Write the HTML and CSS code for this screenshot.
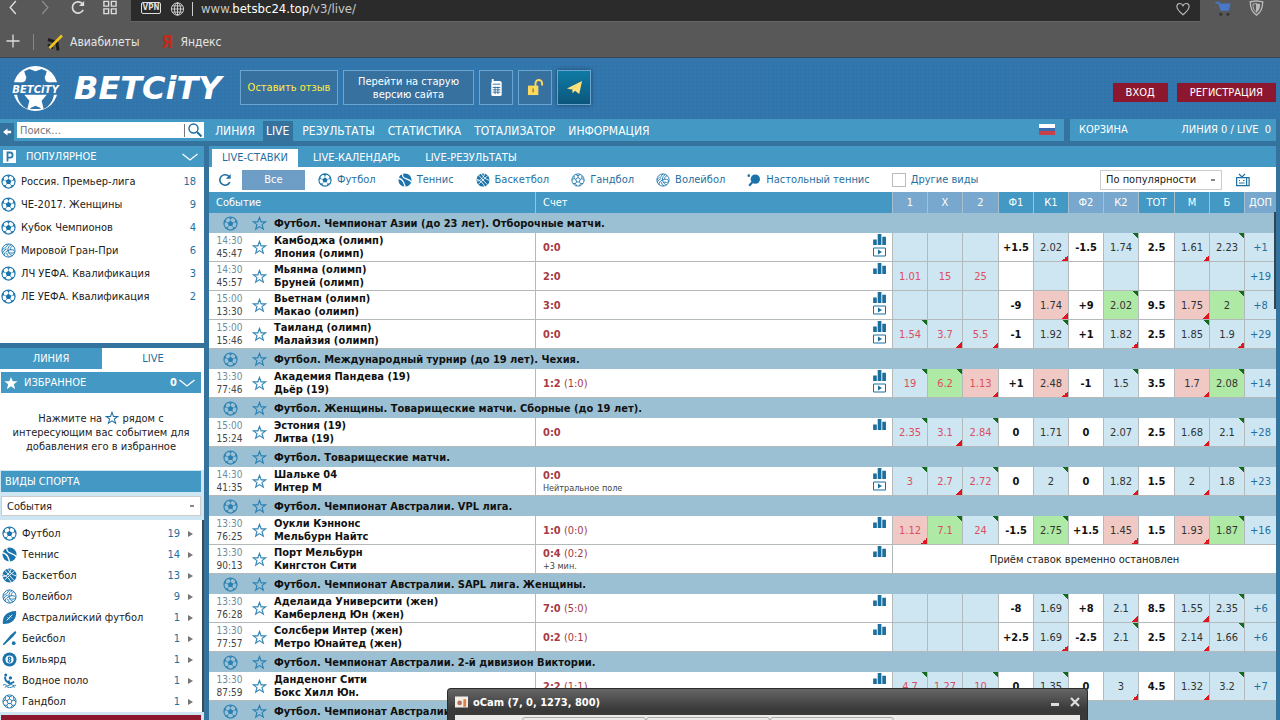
FILE: index.html
```html
<!DOCTYPE html>
<html lang="ru">
<head>
  <meta charset="UTF-8">
  <title>Betcity - Live</title>
  <link rel="stylesheet" href="styles.css">
</head>
<body>
  <svg class="sprite">
    <symbol id="i-football" viewBox="0 0 16 16">
      <circle cx="8" cy="8" r="7" fill="none" stroke="currentColor" stroke-width="1.2"/>
      <path fill="currentColor" d="M8 5l3 2.200-1.100 3.500H6.100L5 7.200zM5.300 1.200h5.400L8 3.400zM12.700 6.500l.8-3.300L15.200 8.500zM3.300 6.500l-.8-3.300L.8 8.500zM10.900 12l3-.4-4 3.400zM5.100 12l-3-.4 4 3.400z"/>
      <path stroke="currentColor" stroke-width=".7" d="M8 5V3M11 7.200l2-.7M9.900 10.700l1 1.500M6.100 10.700l-1 1.500M5 7.200l-2-.7"/>
    </symbol>
    <symbol id="i-tennis" viewBox="0 0 16 16">
      <circle cx="8" cy="8" r="7.500" fill="currentColor"/>
      <path fill="none" stroke="#fff" stroke-width="1.500" d="M5 .5c0 4 1 5 4 6s5 2 6.500 4M0 6c3 .5 5 2 6 4s2 4 2 6"/>
    </symbol>
    <symbol id="i-basket" viewBox="0 0 16 16">
      <circle cx="8" cy="8" r="7.500" fill="currentColor"/>
      <path fill="none" stroke="#fff" stroke-width="1" d="M3 2.500l10 11M13.500 3l-11 10M6 .5c1 3 5 7 9.500 8M.5 7c4 1 8 5 9.500 8.500M10 .5C9 5 5 9 .5 9.500"/>
    </symbol>
    <symbol id="i-handball" viewBox="0 0 16 16">
      <g fill="none" stroke="currentColor" stroke-width="1">
        <circle cx="8" cy="8" r="7"/>
        <path d="M8 5.200l2.600 1.900-1 3.100H6.400l-1-3.100zM8 5.200V3M10.600 7.100l2.200-.8M9.600 10.200l1.300 1.900M6.400 10.200l-1.300 1.900M5.400 7.100l-2.200-.8M8 3l3-1.200M8 3L5 1.800M12.800 6.300l-.6-3M12.800 6.300l2 2.200M3.200 6.300l.6-3M3.200 6.300l-2 2.200M10.900 12.100l2.800-.2M10.900 12.100L9.500 14.800M5.100 12.100l-2.800-.2M5.100 12.100l1.400 2.700"/>
      </g>
    </symbol>
    <symbol id="i-volley" viewBox="0 0 16 16">
      <g fill="none" stroke="currentColor" stroke-width="1">
        <circle cx="8" cy="8" r="7"/>
        <path d="M7.500 8C7 5 8.500 2.500 11 1.800M9.800 7.300c0-2 .8-3.500 2.800-4.300M7.500 8c3-1.500 6-1 7.300 1M7.500 8c-2.800 1-4.500 3.500-4 5.500M6 6.500c-2.500.8-4 2.500-4.400 4.500M5.200 5C3.500 5.200 2 6.500 1.200 8M5.500 4.500C6 3 7 1.800 8.200 1.200M8.800 10.200c2 .8 4 .8 5.700-.2M7.500 8c.2 3 2.500 5.500 5 5.200M6 10.500c.5 2 1.500 3.500 3 4.400"/>
      </g>
    </symbol>
    <symbol id="i-pingpong" viewBox="0 0 16 16">
      <circle cx="9.500" cy="7" r="5.300" fill="currentColor"/>
      <circle cx="2" cy="3" r="1.500" fill="currentColor"/>
      <path stroke="currentColor" stroke-width="2.500" d="M6 10.500L2.500 14.500"/>
    </symbol>
    <symbol id="i-rugby" viewBox="0 0 16 16">
      <path fill="currentColor" d="M1 15C0 8 4 1 15 1c1 8-4 14-14 14z"/>
      <path stroke="#fff" stroke-width="1" d="M5 11l6-6M6 8l2 2M8 6l2 2"/>
    </symbol>
    <symbol id="i-baseball" viewBox="0 0 16 16">
      <path fill="currentColor" d="M.8 14.200L9.500 4l4-3.500c1.500-.5 2 .8 1.500 1.700L11.500 6.500 2 15.200z"/>
      <circle cx="12.500" cy="13" r="2" fill="currentColor"/>
    </symbol>
    <symbol id="i-billiard" viewBox="0 0 16 16">
      <circle cx="8" cy="8" r="7.500" fill="currentColor"/>
      <circle cx="8" cy="8" r="4.300" fill="#fff"/>
      <path fill="none" stroke="currentColor" stroke-width="1.300" d="M8 8a1.300 1.300 0 1 1 .1 0a1.400 1.400 0 1 1-.1 0"/>
    </symbol>
    <symbol id="i-polo" viewBox="0 0 16 16">
      <circle cx="4" cy="2" r="1.600" fill="currentColor"/>
      <circle cx="9" cy="5.200" r="1.800" fill="currentColor"/>
      <path fill="none" stroke="currentColor" stroke-width="2" d="M3 4l1 4 4 3.500 5-2M7 8l1 3"/>
      <path fill="none" stroke="currentColor" d="M1 13q2-1.500 3.500 0t3.500 0 3.500 0 3.500 0M3 15.200q2-1.500 3.500 0t3.500 0 3.500 0"/>
    </symbol>
    <symbol id="i-star" viewBox="0 0 16 16">
      <path fill="none" stroke="currentColor" stroke-width="1.200" d="M8 1.500l1.700 4.700h4.900l-3.900 3 1.400 4.900L8 11.300l-4.100 2.800 1.400-4.900-3.900-3h4.900z"/>
    </symbol>
    <symbol id="i-chart" viewBox="0 0 15 12">
      <path fill="currentColor" d="M0 6h4v6H0zM5 0h4v12H5zM10 3h4v9h-4z"/>
    </symbol>
    <symbol id="i-play" viewBox="0 0 14 10">
      <path fill="none" stroke="currentColor" d="M.5.5h12v8H.5z"/>
      <path fill="currentColor" d="M5 2l4 2.500L5 7z"/>
    </symbol>
    <symbol id="i-chevron" viewBox="0 0 16 8">
      <path fill="none" stroke="currentColor" stroke-width="1.300" d="M.5 1L8 7l7.500-6"/>
    </symbol>
    <symbol id="i-reload" viewBox="0 0 16 16">
      <path fill="none" stroke="currentColor" stroke-width="1.800" d="M13.500 10.500a6 6 0 1 1-.5-6"/>
      <path fill="currentColor" d="M14.500 1v5.500H9z"/>
    </symbol>
  </svg>

  <div class="browser">
    <div class="address-row">
      <div class="browser-nav">
        <svg class="nav-back" viewBox="0 0 8 16"><path d="M7 1L1 8l6 7"/></svg>
        <svg class="nav-forward" viewBox="0 0 8 16"><path d="M1 1l6 7-6 7"/></svg>
        <svg class="nav-reload"><use href="#i-reload"/></svg>
        <svg class="nav-grid" viewBox="0 0 16 16"><path d="M1.500 1.500h5v5h-5zM9.500 1.500h5v5h-5zM1.500 9.500h5v5h-5zM9.500 9.500h5v5h-5z"/></svg>
      </div>
      <div class="address">
        <span class="vpn">VPN</span>
        <svg class="globe" viewBox="0 0 16 16"><circle cx="8" cy="8" r="7"/><ellipse cx="8" cy="8" rx="3.500" ry="7"/><path d="M8 1v14M1 8h14M2.200 4.500h11.600M2.200 11.500h11.600"/></svg>
        <span class="url">www.<b>betsbc24.top</b>/v3/live/</span>
        <svg class="heart" viewBox="0 0 16 16"><path d="M8 14.500C3 10.500 1 8.500 1 5.200 1 1 6.500.5 8 4.200 9.500.5 15 1 15 5.200c0 3.300-2 5.300-7 9.300z"/></svg>
      </div>
      <div class="browser-tools">
        <svg class="cart" viewBox="0 0 18 18"><path fill="#4a78c8" d="M0 2h4l1 2h12l-2 8H6L3 4H0z"/><circle cx="6" cy="16" r="1.700" fill="#333"/><circle cx="14" cy="16" r="1.700" fill="#333"/></svg>
        <svg class="shield" viewBox="0 0 16 18"><path fill="none" stroke="#bbb" stroke-width="1.500" d="M1 2l7-1 7 1c0 8-2 12-7 15C3 14 1 10 1 2z"/><path fill="#bbb" d="M8 4l4 .5c0 5-1 7-4 9.500z"/><path fill="none" stroke="#bbb" d="M8 4l-4 .5c0 5 1 7 4 9.500z"/></svg>
      </div>
    </div>
    <div class="bookmarks">
      <svg class="plus" viewBox="0 0 14 14"><path d="M7 .5v13M.5 7h13"/></svg>
      <span class="sep"></span>
      <a href="#" class="bookmark">
        <svg viewBox="0 0 16 16"><path stroke="#1c1c1c" stroke-width="3" d="M1 5l9 3 1 8"/><path stroke="#1c1c1c" stroke-width="2" d="M1 10l5 4"/><path stroke="#f0c419" stroke-width="2.500" d="M2.500 13.500L15 1"/></svg>Авиабилеты</a>
      <a href="#" class="bookmark"><span class="ya">Я</span>Яндекс</a>
    </div>
  </div>

  <header class="header">
    <svg class="ball" viewBox="0 0 46 46">
      <circle cx="23" cy="23" r="22" fill="#fff"/>
      <path fill="#2f75ac" d="M17 4l6 2 6-2 5 2-2 7 4 5H10l4-5-2-7zM0 17h46v12H0zM5 29h7l5 6-2 8c-6-3-9-8-10-14zM41 29h-7l-5 6 2 8c6-3 9-8 10-14zM18 42l5-2 5 2v1H18z"/>
      <path fill="#fff" d="M4 16l5-8 5 3-1 5-5 1zM42 16l-5-8-5 3 1 5 5 1z"/>
      <text x="23" y="27" text-anchor="middle">BETCiTY</text>
    </svg>
    <a href="#" class="logo">BETCiTY</a>
    <div class="header-buttons">
      <button class="hbtn feedback">Оставить отзыв</button>
      <button class="hbtn old-version">Перейти на старую версию сайта</button>
      <button class="hbtn icon" aria-label="Мобильная версия"><svg viewBox="0 0 16 18"><path fill="#fff" d="M3 3V0h2v2h7l1.500 1.500V17l-1 1h-9l-1-1V4z"/><path stroke="#37719f" d="M4 5.500h8M4 9h8M4 11.500h8M4 14h8M6.500 8v8M9.500 8v8"/></svg></button>
      <button class="hbtn icon" aria-label="Доступ"><svg viewBox="0 0 18 18"><path fill="#ffd95e" d="M1 7h11v10H1z"/><path fill="none" stroke="#ffd95e" stroke-width="2" d="M9 8V4.500a3.500 3.500 0 0 1 7 0V7"/><path stroke="#8a7a3e" stroke-width="1.500" d="M6.500 10v4"/></svg></button>
      <button class="hbtn icon telegram" aria-label="Telegram"><svg viewBox="0 0 18 18"><path fill="#ffe27a" d="M1 10L17 2l-3 14-4.500-3.500L7 15l-.5-4.500L14 5l-8.500 6z"/></svg></button>
    </div>
    <div class="auth">
      <button class="red-btn">ВХОД</button>
      <button class="red-btn">РЕГИСТРАЦИЯ</button>
    </div>
  </header>

  <div class="navbar">
    <div class="search">
      <button class="collapse" aria-label="Свернуть"><svg viewBox="0 0 10 8"><path fill="#fff" d="M0 4l5-4v2.500h4v3H5V8z"/></svg></button>
      <label class="search-box">
        <input type="text" placeholder="Поиск...">
        <svg viewBox="0 0 14 14"><circle cx="5.500" cy="5.500" r="4.500" fill="none" stroke="#1b6ea3" stroke-width="1.400"/><path stroke="#1b6ea3" stroke-width="2" d="M9 9l4.500 4.500"/></svg>
      </label>
    </div>
    <nav class="menu">
      <a href="#">ЛИНИЯ</a>
      <a href="#" class="active">LIVE</a>
      <a href="#">РЕЗУЛЬТАТЫ</a>
      <a href="#">СТАТИСТИКА</a>
      <a href="#">ТОТАЛИЗАТОР</a>
      <a href="#">ИНФОРМАЦИЯ</a>
      <span class="flag"></span>
    </nav>
    <div class="basket"><span>КОРЗИНА</span><span>ЛИНИЯ 0 / LIVE &nbsp;0</span></div>
  </div>

  <div class="page">
    <aside class="sidebar">
      <section class="popular">
        <h2 class="side-title"><svg class="p-mark" viewBox="0 0 13 13"><path fill="#fff" d="M0 0h13v13H0z"/><path fill="none" stroke="#2b7db0" stroke-width="1.800" d="M4.500 11.500v-9h2.500a2.500 2.500 0 0 1 0 5.200H4.500"/></svg>ПОПУЛЯРНОЕ<svg class="chevron"><use href="#i-chevron"/></svg></h2>
        <ul class="popular-list">
          <li><svg><use href="#i-football"/></svg><a href="#">Россия. Премьер-лига</a><span>18</span></li>
          <li><svg><use href="#i-football"/></svg><a href="#">ЧЕ-2017. Женщины</a><span>9</span></li>
          <li><svg><use href="#i-football"/></svg><a href="#">Кубок Чемпионов</a><span>4</span></li>
          <li><svg><use href="#i-volley"/></svg><a href="#">Мировой Гран-При</a><span>6</span></li>
          <li><svg><use href="#i-football"/></svg><a href="#">ЛЧ УЕФА. Квалификация</a><span>3</span></li>
          <li><svg><use href="#i-football"/></svg><a href="#">ЛЕ УЕФА. Квалификация</a><span>2</span></li>
        </ul>
      </section>

      <div class="side-tabs">
        <button>ЛИНИЯ</button>
        <button class="active">LIVE</button>
      </div>

      <section class="favorites">
        <h2 class="side-title"><svg class="star-mark" viewBox="0 0 16 16"><path fill="#fff" d="M8 1l2 5h5.500l-4.300 3.400 1.600 5.600L8 11.700 3.200 15l1.600-5.600L.5 6H6z"/></svg>ИЗБРАННОЕ<b class="count">0</b><svg class="chevron"><use href="#i-chevron"/></svg></h2>
        <p>Нажмите на <svg><use href="#i-star"/></svg> рядом с<br>интересующим вас событием для<br>добавления его в избранное</p>
      </section>

      <section class="sports">
        <h2 class="side-title">ВИДЫ СПОРТА</h2>
        <div class="select-wrap">
          <select aria-label="События"><option>События</option></select>
        </div>
        <ul class="sports-list">
          <li><svg><use href="#i-football"/></svg><a href="#">Футбол</a><span>19</span></li>
          <li><svg><use href="#i-tennis"/></svg><a href="#">Теннис</a><span>14</span></li>
          <li><svg><use href="#i-basket"/></svg><a href="#">Баскетбол</a><span>13</span></li>
          <li><svg><use href="#i-volley"/></svg><a href="#">Волейбол</a><span>9</span></li>
          <li><svg><use href="#i-rugby"/></svg><a href="#">Австралийский футбол</a><span>1</span></li>
          <li><svg><use href="#i-baseball"/></svg><a href="#">Бейсбол</a><span>1</span></li>
          <li><svg><use href="#i-billiard"/></svg><a href="#">Бильярд</a><span>1</span></li>
          <li><svg><use href="#i-polo"/></svg><a href="#">Водное поло</a><span>1</span></li>
          <li><svg><use href="#i-handball"/></svg><a href="#">Гандбол</a><span>1</span></li>
        </ul>
        <div class="red-line"></div>
      </section>
    </aside>

    <main class="main">
      <div class="tabs">
        <a href="#" class="active">LIVE-СТАВКИ</a>
        <a href="#">LIVE-КАЛЕНДАРЬ</a>
        <a href="#">LIVE-РЕЗУЛЬТАТЫ</a>
      </div>

      <div class="filters">
        <button class="refresh" aria-label="Обновить"><svg><use href="#i-reload"/></svg></button>
        <button class="all">Все</button>
        <div class="kinds">
          <a href="#"><svg><use href="#i-football"/></svg>Футбол</a>
          <a href="#"><svg><use href="#i-tennis"/></svg>Теннис</a>
          <a href="#"><svg><use href="#i-basket"/></svg>Баскетбол</a>
          <a href="#"><svg><use href="#i-handball"/></svg>Гандбол</a>
          <a href="#"><svg><use href="#i-volley"/></svg>Волейбол</a>
          <a href="#"><svg><use href="#i-pingpong"/></svg>Настольный теннис</a>
          <label><input type="checkbox">Другие виды</label>
        </div>
        <select class="sort" aria-label="Сортировка"><option>По популярности</option></select>
        <svg class="tv" viewBox="0 0 14 14"><path fill="none" stroke="currentColor" stroke-width="1.200" d="M.6 4.600h10v8H.6zM10.600 4.600h2.500v8h-2.500M3 1l3 3 3-3M3 7.500h1M7 7.500h1.500M3 10h5.500"/></svg>
      </div>

      <table class="odds">
        <colgroup>
          <col class="c-event"><col>
          <col class="c-odd"><col class="c-odd"><col class="c-wide">
          <col class="c-odd"><col class="c-odd"><col class="c-odd"><col class="c-odd">
          <col class="c-wide"><col class="c-odd"><col class="c-odd"><col class="c-more">
        </colgroup>
        <thead>
          <tr>
            <th class="left">Событие</th><th class="left">Счет</th>
            <th class="pale">1</th><th class="pale">X</th><th class="pale">2</th>
            <th>Ф1</th><th>К1</th><th class="pale">Ф2</th><th class="pale">К2</th>
            <th>ТОТ</th><th>М</th><th>Б</th><th class="pale">ДОП</th>
          </tr>
        </thead>
        <tbody id="rows"></tbody>
      </table>
      <div class="scroll-thumb"></div>
    </main>
  </div>

  <div class="ocam">
    <div class="ocam-title">
      <svg viewBox="0 0 14 12"><path fill="#f5ece6" d="M0 0h14v12H0z"/><circle cx="5" cy="7" r="2.500" fill="#b5705a"/><path fill="#d9824a" d="M9 3h3v8H9z"/></svg>
      <span>oCam (7, 0, 1273, 800)</span>
      <button class="min" aria-label="Свернуть"></button>
      <button class="close" aria-label="Закрыть"><svg viewBox="0 0 10 10"><path d="M1 1l8 8M9 1L1 9"/></svg></button>
    </div>
    <div class="ocam-body"><i></i><i></i><i></i></div>
  </div>

  <script src="script.js"></script>
</body>
</html>
```
FILE: styles.css
```css
:root {
  --blue: #4398c4;
  --dark: #35739f;
  --link: #1f6fa0;
  --group: #9bc0d3;
  --cell: #cde6f2;
  --red: #8e1730;
}

* {
  box-sizing: border-box;
}

body {
  margin: 0;
  height: 100vh;
  display: flex;
  flex-direction: column;
  overflow: hidden;
  position: relative;
  background: var(--dark);
  font-family: "DejaVu Sans Condensed", "DejaVu Sans", Tahoma, sans-serif;
  font-size: 11px;
  color: #222;
}

a {
  color: inherit;
  text-decoration: none;
}

button, input, select {
  font: inherit;
  margin: 0;
  padding: 0;
  border: 0;
  border-radius: 0;
}

ul, h2, p {
  margin: 0;
  padding: 0;
  list-style: none;
}

.sprite {
  display: none;
}

/* browser */
.browser {
  flex: none;
  background: #585858;
  border-bottom: 1px solid #3d4a54;
}

.address-row {
  display: flex;
  height: 22px;
}

.browser-nav {
  width: 131px;
  display: flex;
  padding-left: 9px;
}

.browser-nav svg {
  height: 15px;
  fill: none;
  stroke: #ddd;
  stroke-width: 1.5;
}

.nav-back {
  width: 8px;
}

.browser-nav .nav-forward {
  width: 8px;
  margin-left: 24px;
  stroke: #8a8a8a;
}

.browser-nav .nav-reload {
  width: 16px;
  margin-left: 21px;
  color: #ddd;
  stroke: none;
}

.nav-grid {
  width: 16px;
  margin-left: 16px;
}

.address {
  flex: 1;
  display: flex;
  align-items: flex-start;
  background: #2b2b2b;
  border-bottom: 1px solid #666;
  padding: 2px 9px 0 10px;
}

.vpn {
  border: 1px solid #ddd;
  border-radius: 2px;
  color: #ddd;
  font-size: 8px;
  font-weight: bold;
  line-height: 10px;
  text-align: center;
  width: 20px;
}

.globe {
  width: 15px;
  height: 14px;
  margin-left: 9px;
  fill: none;
  stroke: #ddd;
}

.url {
  flex: 1;
  margin-left: 7px;
  padding-left: 8px;
  border-left: 1px solid #ccc;
  font-size: 13px;
  line-height: 14px;
  color: #c8c8c8;
}

.url b {
  font-weight: normal;
  color: #fff;
}

.heart {
  width: 16px;
  height: 14px;
  fill: none;
  stroke: #bbb;
  stroke-width: 1.3;
}

.browser-tools {
  width: 80px;
  display: flex;
  gap: 16px;
  padding-left: 15px;
}

.browser-tools svg {
  width: 17px;
  height: 16px;
}

.bookmarks {
  height: 35px;
  display: flex;
  align-items: center;
  padding: 5px 0 0 6px;
  font-size: 12px;
  color: #e6e6e6;
}

.plus {
  width: 14px;
  height: 14px;
  stroke: #ddd;
  stroke-width: 1.3;
  margin-bottom: 3px;
}

.sep {
  width: 1px;
  height: 16px;
  margin: 0 13px;
  background: #888;
}

.bookmark {
  display: flex;
  align-items: center;
  margin-right: 22px;
}

.bookmark svg {
  width: 16px;
  height: 17px;
  margin-right: 7px;
  fill: none;
}

.ya {
  color: #c5281c;
  font-size: 17px;
  font-weight: bold;
  line-height: 18px;
  width: 19px;
}

/* header */
.header {
  flex: none;
  height: 61px;
  display: flex;
  padding: 0 4px 0 12px;
  background-color: #3079b0;
  background-image:
    repeating-linear-gradient(0deg, rgba(70, 80, 120, 0.1) 0 1px, transparent 1px 4px),
    repeating-linear-gradient(90deg, rgba(70, 80, 120, 0.1) 0 1px, transparent 1px 4px);
}

.ball {
  width: 47px;
  height: 47px;
  margin-top: 7px;
  overflow: visible;
}

.ball text {
  font-size: 11px;
  font-weight: bold;
  font-style: italic;
  fill: #fff;
}

.logo {
  width: 166px;
  margin-left: 15px;
  color: #fff;
  font-family: "DejaVu Sans", Verdana, sans-serif;
  font-size: 32px;
  line-height: 60px;
  font-weight: bold;
  font-style: italic;
}

.header-buttons {
  display: flex;
  gap: 5px;
  padding-top: 12px;
}

.hbtn {
  height: 35px;
  background: #37719f;
  border: 1px solid #6aa5cf;
  color: #fff;
  line-height: 13px;
}

.feedback {
  width: 98px;
  color: #ffee3c;
}

.old-version {
  width: 131px;
}

.icon {
  width: 34px;
  display: flex;
  align-items: center;
  justify-content: center;
}

.icon svg {
  width: 17px;
  height: 17px;
}

.telegram {
  background: linear-gradient(#0f7ba5, #0c567c);
  box-shadow: 0 0 5px rgba(0, 0, 0, 0.4);
}

.auth {
  margin-left: auto;
  display: flex;
  gap: 9px;
  padding-top: 25px;
}

.red-btn {
  height: 19px;
  padding: 0 13px;
  background: var(--red);
  color: #fff;
}

/* navbar */
.navbar {
  flex: none;
  display: flex;
  height: 22px;
  margin: 0 4px 5px 0;
  color: #fff;
}

.search {
  width: 204px;
  display: flex;
  background: var(--blue);
}

.collapse {
  width: 14px;
  height: 18px;
  margin-top: 4px;
  background: var(--dark);
}

.collapse svg {
  width: 9px;
  height: 8px;
}

.search-box {
  flex: 1;
  display: flex;
  align-items: center;
  margin: 3px 0 3px 3px;
  padding: 0 2px 0 3px;
  background: #fff;
}

.search-box input {
  flex: 1;
  min-width: 0;
  height: 13px;
  border-right: 1px solid #777;
  outline: 0;
}

.search-box input::placeholder {
  color: #777;
}

.search-box svg {
  width: 14px;
  height: 14px;
  margin-left: 3px;
}

.menu {
  flex: 1;
  display: flex;
  align-items: flex-end;
  background: var(--blue);
  padding-left: 6px;
  font-size: 12px;
}

.menu a {
  padding: 0 4px 0 5px;
  margin-right: 4px;
  line-height: 20px;
}

.menu .active {
  background: var(--dark);
  padding: 0 4px 0 3px;
}

.flag {
  width: 16px;
  height: 11px;
  margin: 0 9px 6px auto;
  background: linear-gradient(#fff 0 4px, #3d6bb0 4px 7px, #c9404a 7px);
}

.basket {
  width: 206px;
  margin-left: 6px;
  display: flex;
  justify-content: space-between;
  padding: 0 5px 0 9px;
  background: var(--blue);
  line-height: 22px;
}

/* page */
.page {
  flex: 1;
  min-height: 0;
  display: flex;
  gap: 5px;
  padding-right: 4px;
}

.sidebar {
  width: 204px;
  flex: none;
  overflow: hidden;
}

.side-title {
  display: flex;
  align-items: center;
  height: 21px;
  padding: 0 6px 0 3px;
  background: var(--blue);
  color: #fff;
  font-size: 11px;
  font-weight: normal;
}

.p-mark {
  width: 13px;
  height: 13px;
  margin-right: 10px;
}

.star-mark {
  width: 14px;
  height: 14px;
  margin-right: 6px;
}

.chevron {
  width: 16px;
  height: 8px;
  margin-left: auto;
}

.count {
  margin-left: auto;
}

.count + .chevron {
  margin-left: 2px;
}

.popular {
  background: #fff;
  height: 197px;
}

.popular-list {
  padding-top: 3px;
}

.popular-list li {
  display: flex;
  align-items: center;
  height: 23px;
  padding: 0 8px 0 1px;
}

.popular-list svg, .sports-list svg {
  width: 15px;
  height: 15px;
  margin-right: 5px;
  color: #1a74ab;
}

.popular-list span {
  margin-left: auto;
  color: var(--link);
}

.side-tabs {
  display: flex;
  margin-top: 5px;
  background: #fff;
}

.side-tabs button {
  flex: 1;
  height: 21px;
  background: var(--blue);
  color: #fff;
}

.side-tabs .active {
  background: #fff;
  color: var(--link);
}

.favorites {
  height: 101px;
  padding: 3px 3px 0 1px;
  background: #fff;
}

.favorites p {
  padding: 18px 8px 0;
  text-align: center;
  line-height: 14px;
}

.favorites p svg {
  width: 14px;
  height: 14px;
  color: var(--link);
  vertical-align: -3px;
}

.sports {
  background: var(--cell);
  padding: 1px 0 0;
}

.sports .side-title {
  margin: 0 3px 0 1px;
  padding-left: 4px;
}

.select-wrap {
  padding: 4px 3px 4px 1px;
}

select {
  appearance: none;
  border: 1px solid #ccc;
  padding-left: 5px;
  color: #222;
  background: #fff linear-gradient(#888, #888) no-repeat right 6px center / 4px 2px;
}

.select-wrap select {
  display: block;
  width: 100%;
  height: 20px;
}

.sports-list {
  padding-top: 3px;
  background: #fff;
  border-right: 2px solid #3b4a56;
}

.sports-list li {
  display: flex;
  align-items: center;
  height: 21px;
  padding: 0 9px 0 2px;
}

.sports-list span {
  margin-left: auto;
  color: var(--link);
}

.sports-list li::after {
  content: "";
  margin-left: 8px;
  border: 3px solid transparent;
  border-left: 5px solid #777;
  border-right: 0;
}

.red-line {
  height: 20px;
  margin: 3px 3px 0 1px;
  background: var(--red);
}

/* main */
.main {
  flex: 1;
  min-width: 0;
  position: relative;
  overflow: hidden;
  background: var(--group);
}

.tabs {
  display: flex;
  height: 21px;
  padding: 3px 0 0 3px;
  background: var(--blue);
  color: #fff;
  line-height: 18px;
}

.tabs a {
  padding: 0 10px;
  margin-right: 5px;
}

.tabs .active {
  background: #fff;
  color: var(--link);
}

.filters {
  display: flex;
  align-items: center;
  height: 25px;
  padding: 0 26px 0 9px;
  background: #fff;
  color: var(--link);
}

.filters svg {
  width: 14px;
  height: 14px;
}

.refresh {
  background: none;
  color: var(--link);
  height: 14px;
  margin-right: 10px;
}

.all {
  width: 63px;
  height: 20px;
  background: #6e9dc6;
  color: #fff;
}

.kinds {
  flex: 1;
  display: flex;
  align-items: center;
  gap: 22px;
  padding-left: 13px;
}

.kinds a, .kinds label {
  display: flex;
  align-items: center;
  gap: 5px;
}

.kinds svg {
  color: #1a74ab;
}

.kinds input {
  appearance: none;
  width: 14px;
  height: 14px;
  border: 1px solid #bbb;
  background: #fff;
}

.sort {
  width: 122px;
  height: 20px;
  margin-right: 14px;
}

.odds {
  width: 100%;
  table-layout: fixed;
  border-collapse: separate;
  border-spacing: 0;
}

.c-event {
  width: 327px;
}

.c-odd {
  width: 35px;
}

.c-wide {
  width: 36px;
}

.c-more {
  width: 31px;
}

.odds th {
  height: 21px;
  padding: 0;
  background: var(--blue);
  border-right: 1px solid #a9bfcc;
  color: #fff;
  font-weight: normal;
}

.odds th.left {
  text-align: left;
  padding-left: 7px;
}

.odds .pale {
  background: #78a8cd;
}

.odds td {
  height: 29px;
  padding: 0;
  background: #fff;
  border-right: 1px solid #b4b9bc;
  border-bottom: 1px solid #b4b9bc;
  text-align: center;
  line-height: 13px;
}

.odds th:last-child, .odds td:last-child {
  border-right: 0;
}

.odds .group td {
  height: 20px;
  background: var(--group);
  border: 0;
  font-weight: bold;
  color: #111;
}

.group-title, .event {
  display: flex;
  align-items: center;
  text-align: left;
}

.group-title svg {
  width: 15px;
  height: 15px;
  margin-left: 14px;
  color: #2c80b2;
}

.group-title span {
  margin-left: 7px;
}

.time {
  width: 27px;
  margin: 0 9px 0 7px;
  font-size: 10px;
  color: #444;
}

.time span {
  display: block;
  text-align: center;
}

.time .start {
  color: #6f8c99;
}

.event svg {
  width: 15px;
  height: 15px;
  margin-right: 7px;
  color: #3585b3;
}

.teams {
  font-weight: bold;
  color: #111;
}

.score {
  display: flex;
  justify-content: space-between;
  padding: 0 5px 0 7px;
  text-align: left;
  color: #a83a44;
}

.result {
  align-self: center;
}

.note {
  font-size: 9px;
  line-height: 12px;
  color: #444;
}

.marks {
  display: flex;
  flex-direction: column;
  gap: 2px;
  height: 26px;
  color: #1b6f9f;
}

.marks svg {
  width: 14px;
  height: 11px;
}

.odds .odd {
  background-color: var(--cell);
  color: #333;
}

.odds .win {
  color: #dc4f60;
}

.odds .param {
  background: #fff;
  color: #111;
  font-weight: bold;
}

.odds .more {
  background: var(--cell);
  color: var(--link);
}

.odds .green {
  background-color: #aeeaa6;
}

.odds .rose {
  background-color: #f0c8c4;
}

.odds .up {
  background-image: linear-gradient(45deg, transparent 50%, #136b1c 50%);
  background-repeat: no-repeat;
  background-size: 6px 5px;
  background-position: right top;
}

.odds .down {
  background-image: linear-gradient(135deg, transparent 50%, #dd1620 50%);
  background-repeat: no-repeat;
  background-size: 6px 6px;
  background-position: right bottom;
}

.scroll-thumb {
  position: absolute;
  right: 0;
  top: 66px;
  width: 2px;
  height: 97px;
  background: #2f4654;
}

/* recorder window on top of the page */
.ocam {
  position: absolute;
  left: 447px;
  bottom: 0;
  width: 641px;
  height: 32px;
  padding: 0 7px;
  border: 1px solid #2c2c2c;
  border-bottom: 0;
  border-radius: 4px 4px 0 0;
  background: linear-gradient(#666, #3a3a3a 20px);
  color: #fff;
  overflow: hidden;
}

.ocam-title {
  display: flex;
  align-items: center;
  height: 26px;
  font-weight: bold;
}

.ocam-title svg {
  width: 13px;
  height: 12px;
}

.ocam-title span {
  flex: 1;
  margin-left: 5px;
}

.ocam button {
  background: none;
}

.ocam .min {
  width: 8px;
  height: 3px;
  margin: 4px 11px 0 0;
  background: #ddd;
}

.ocam .close svg {
  display: block;
  width: 10px;
  height: 10px;
  stroke: #ddd;
  stroke-width: 2.2;
}

.ocam-body {
  display: flex;
  height: 6px;
  padding: 2px 0 0 67px;
  background: #ecebea;
}

.ocam-body i {
  width: 124px;
  border: 1px solid #aaa;
  border-radius: 3px 3px 0 0;
}
```
FILE: script.js
```js
// odds: value:flags, u - up, d - down, g - green cell, r - red cell
const groups = [
  { title: 'Футбол. Чемпионат Азии (до 23 лет). Отборочные матчи.', rows: [
    ['14:30', '45:47', 'Камбоджа (олимп)', 'Япония (олимп)', '0:0', '', '', 1, ',,,+1.5,2.02:d,-1.5,1.74:u,2.5,1.61:d,2.23:u,+1'],
    ['14:30', '45:57', 'Мьянма (олимп)', 'Бруней (олимп)', '2:0', '', '', 0, '1.01,15,25,,,,,,,,+19'],
    ['15:00', '13:30', 'Вьетнам (олимп)', 'Макао (олимп)', '3:0', '', '', 1, ',,,-9,1.74:rd,+9,2.02:gu,9.5,1.75:rd,2:gu,+8'],
    ['15:00', '15:46', 'Таиланд (олимп)', 'Малайзия (олимп)', '0:0', '', '', 1, '1.54:u,3.7:d,5.5:d,-1,1.92:u,+1,1.82:d,2.5,1.85:u,1.9:d,+29']
  ] },
  { title: 'Футбол. Международный турнир (до 19 лет). Чехия.', rows: [
    ['13:30', '77:46', 'Академия Пандева (19)', 'Дьёр (19)', '1:2', '(1:0)', '', 1, '19:u,6.2:gu,1.13:rd,+1,2.48:rd,-1,1.5:u,3.5,1.7:rd,2.08:gu,+14']
  ] },
  { title: 'Футбол. Женщины. Товарищеские матчи. Сборные (до 19 лет).', rows: [
    ['15:00', '15:24', 'Эстония (19)', 'Литва (19)', '0:0', '', '', 0, '2.35:u,3.1:d,2.84:u,0,1.71,0,2.07,2.5,1.68:d,2.1:u,+28']
  ] },
  { title: 'Футбол. Товарищеские матчи.', rows: [
    ['14:30', '41:35', 'Шальке 04', 'Интер М', '0:0', '', 'Нейтральное поле', 1, '3:u,2.7:d,2.72:u,0,2:u,0,1.82:d,1.5,2:d,1.8:u,+23']
  ] },
  { title: 'Футбол. Чемпионат Австралии. VPL лига.', rows: [
    ['13:30', '76:25', 'Оукли Кэннонс', 'Мельбурн Найтс', '1:0', '(0:0)', '', 0, '1.12:rd,7.1:gu,24:u,-1.5,2.75:gu,+1.5,1.45:rd,1.5,1.93:rd,1.87:gu,+16'],
    ['13:30', '90:13', 'Порт Мельбурн', 'Кингстон Сити', '0:4', '(0:2)', '+3 мин.', 0, '']
  ] },
  { title: 'Футбол. Чемпионат Австралии. SAPL лига. Женщины.', rows: [
    ['13:30', '76:28', 'Аделаида Университи (жен)', 'Камберленд Юн (жен)', '7:0', '(5:0)', '', 0, ',,,-8,1.69:u,+8,2.1:d,8.5,1.55:d,2.35:u,+6'],
    ['13:30', '77:57', 'Солсбери Интер (жен)', 'Метро Юнайтед (жен)', '0:2', '(0:1)', '', 0, ',,,+2.5,1.69:d,-2.5,2.1:u,2.5,2.14:d,1.66:u,+6']
  ] },
  { title: 'Футбол. Чемпионат Австралии. 2-й дивизион Виктории.', rows: [
    ['13:30', '87:59', 'Данденонг Сити', 'Бокс Хилл Юн.', '2:2', '(1:1)', '', 0, '4.7:u,1.27,10:u,0,1.35:u,0,3:d,4.5,1.32:d,3.2:u,+7']
  ] },
  { title: 'Футбол. Чемпионат Австралии.', rows: [] }
];

const kinds = ['win', 'win', 'win', 'param', '', 'param', '', 'param', '', '', 'more'];
const flagClass = { u: 'up', d: 'down', g: 'green', r: 'rose' };
const icon = id => `<svg><use href="#i-${id}"/></svg>`;

function oddsCells(str) {
  if (!str) return '<td colspan="11">Приём ставок временно остановлен</td>';
  return str.split(',').map((item, i) => {
    const [value, flags = ''] = item.split(':');
    const cls = [...flags].map(f => flagClass[f]).join(' ');
    return `<td class="odd ${kinds[i]} ${cls}">${value}</td>`;
  }).join('');
}

function matchRow([start, clock, home, away, score, half, note, video, odds]) {
  return `
    <tr>
      <td><div class="event">
        <div class="time"><span class="start">${start}</span><span>${clock}</span></div>
        ${icon('star')}
        <div class="teams">${home}<br>${away}</div>
      </div></td>
      <td><div class="score">
        <div class="result"><b>${score}</b> ${half}${note ? `<div class="note">${note}</div>` : ''}</div>
        <div class="marks">${icon('chart')}${video ? icon('play') : ''}</div>
      </div></td>
      ${oddsCells(odds)}
    </tr>`;
}

document.getElementById('rows').innerHTML = groups.map(g => `
  <tr class="group"><td colspan="13"><div class="group-title">
    ${icon('football')}${icon('star')}<span>${g.title}</span>
  </div></td></tr>
  ${g.rows.map(matchRow).join('')}`).join('');
```
